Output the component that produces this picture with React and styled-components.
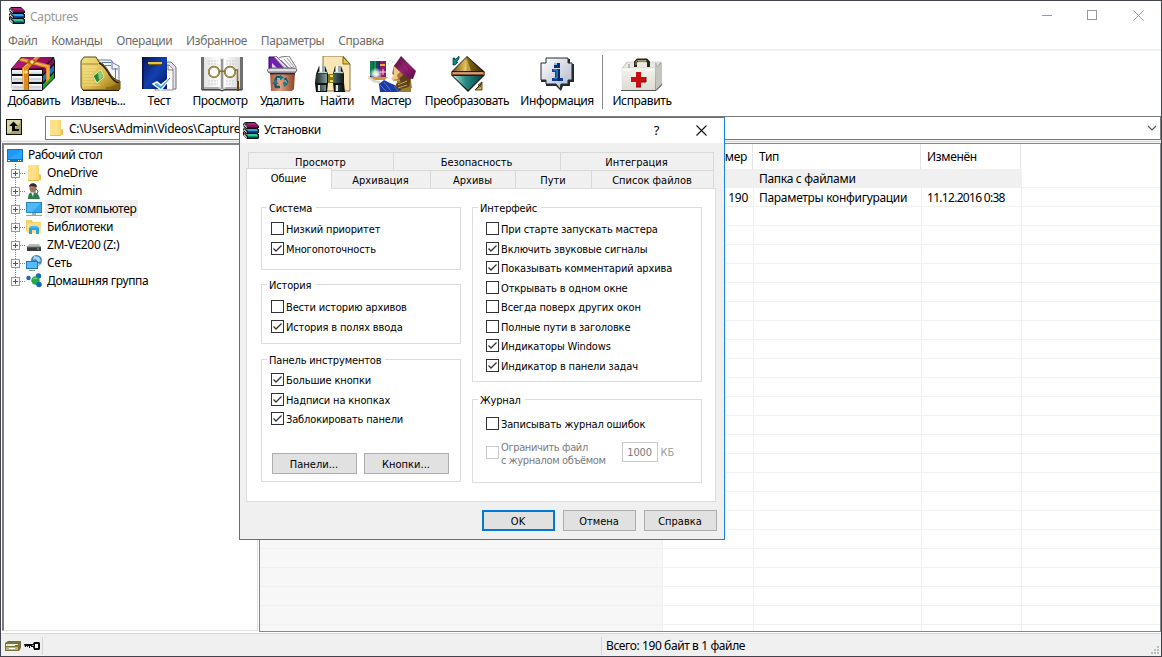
import React from 'react';
import styled, { createGlobalStyle, css } from 'styled-components';

const Global = createGlobalStyle`
  * { box-sizing: border-box; }
  body { margin: 0; background: #fff; overflow: hidden; }
`;

const Window = styled.div`
  position: relative;
  display: flex;
  flex-direction: column;
  width: 1162px;
  height: 657px;
  border: 1px solid #43434d;
  background: #fff;
  color: #000;
  font: 12px/16px 'Noto Sans', 'Open Sans', sans-serif;
  letter-spacing: -0.33px;
  white-space: nowrap;
`;

/* ---------- title bar and menu ---------- */

const TitleBar = styled.header`
  display: flex;
  align-items: center;
  height: 29px;
  padding: 0 17px 0 8px;
  color: #999;
`;
const Title = styled.span`
  margin-left: 4px;
  flex: 1;
  padding-top: ${(p) => (p.$drop ? 2 : 0)}px;
  padding-bottom: ${(p) => (p.$drop ? 0 : 1)}px;
`;
const Caption = styled.div`
  display: flex;
  gap: 34px;
`;
const MenuBar = styled.nav`
  display: flex;
  gap: 13.8px;
  height: 21px;
  padding: 3px 7px 0;
  border-bottom: 2px solid #f0f0f0;
  color: #6d6d6d;
  letter-spacing: -0.4px;
`;

/* ---------- toolbar ---------- */

const Toolbar = styled.div`
  display: flex;
  height: 65px;
  padding-left: 1px;
`;
const ToolButton = styled.div`
  display: flex;
  flex-direction: column;
  align-items: center;
  width: ${(p) => p.$w}px;
  padding-top: 5px;
  letter-spacing: -0.38px;
  svg { margin-left: ${(p) => p.$shift || 0}px; }
  span { margin-top: 1px; }
`;
const ToolDivider = styled.div`
  width: 1px;
  height: 54px;
  margin: 4px 3px 0 2px;
  background: #8c8c8c;
`;

/* ---------- address row ---------- */

const AddressRow = styled.div`
  display: flex;
  align-items: center;
  height: 24px;
  padding-left: 5px;
`;
const UpButton = styled.div`
  width: 16px;
  height: 16px;
  margin: 0 23px 2px 0;
  svg { display: block; }
`;
const PathBox = styled.div`
  display: flex;
  flex: 1;
  align-items: center;
  height: 24px;
  padding: 0 3px 0 2px;
  border: 1px solid #7a7a7a;
  letter-spacing: -0.3px;
  span { flex: 1; margin-left: 5px; padding-top: 1px; }
`;
const Rule = styled.div`
  height: 3px;
  border-top: 1px solid #f0f0f0;
  background: linear-gradient(#dcdcdc 1px, #f4f4f4 1px);
`;

/* ---------- panes ---------- */

const Panes = styled.div`
  display: flex;
  height: 489px;
`;
const Tree = styled.div`
  width: 256px;
  height: 488px;
  margin-left: 1px;
  padding-top: 1px;
  border-style: solid;
  border-width: 2px 1px 1px 2px;
  border-color: #84848a #e3e3e3 #e3e3e3 #7d7b80;
`;
const TreeRow = styled.div`
  display: flex;
  align-items: center;
  height: 18px;
  padding-left: ${(p) => (p.$root ? 3 : 6)}px;
  svg { flex: none; }
`;
const TreeLabel = styled.span`
  height: 18px;
  margin-left: 3px;
  padding: 0 2px;
  line-height: 18px;
  background: ${(p) => (p.$selected ? '#f0f0f0' : 'transparent')};
`;
const Expander = styled.div`
  display: flex;
  flex: none;
  width: 16px;
  height: 18px;
`;

const List = styled.div`
  flex: 1;
  height: 489px;
  margin-left: 1px;
  border: 1px solid #828790;
  overflow: hidden;
`;
const columns = '403px 91px 168px 100px 1fr';
const Header = styled.div`
  display: grid;
  grid-template-columns: ${columns};
  height: 25px;
`;
const HeadCell = styled.div`
  height: 25px;
  padding: 5px 5px 0 6px;
  text-align: ${(p) => (p.$right ? 'right' : 'left')};
  border-right: 1px solid ${(p) => (p.$last ? 'transparent' : '#e5e5e5')};
  margin: 0 1px 0 -1px;
`;
const ListRow = styled.div`
  display: grid;
  grid-template-columns: ${columns};
  height: 19px;
`;
const Cell = styled.div`
  padding: 2px 5px 0;
  line-height: 16px;
  text-align: ${(p) => (p.$right ? 'right' : 'left')};
  border-bottom: 1px solid #f0f0f0;
  border-right: 1px solid ${(p) => (p.$last ? 'transparent' : '#f0f0f0')};
  background: ${(p) => (p.$selected ? '#f0f0f0' : p.$sorted ? '#f7f7f7' : '#fff')};
  letter-spacing: ${(p) => (p.$tight ? '-0.7px' : '-0.3px')};
`;

/* ---------- status bar ---------- */

const StatusBar = styled.footer`
  display: flex;
  height: 23px;
  margin-top: 1px;
  padding: 3px 1px 0 4px;
  border-top: 1px solid #d9d9d9;
  background: #f0f0f0;
  letter-spacing: -0.4px;
`;
const StatusIcons = styled.div`
  display: flex;
  gap: 3px;
  width: 38px;
  height: 18px;
  align-items: center;
  border-right: 1px solid #d4d4d4;
`;
const StatusText = styled.div`
  display: flex;
  flex: 1;
  justify-content: space-between;
  height: 18px;
  margin-left: 558px;
  padding-left: 4px;
  border-left: 1px solid #d4d4d4;
  line-height: 18px;
  svg { align-self: flex-end; }
`;

/* ---------- dialog ---------- */

const Dialog = styled.section`
  position: absolute;
  left: 238px;
  top: 116px;
  display: flex;
  flex-direction: column;
  width: 486px;
  height: 423px;
  border: 1px solid #1883d7;
  background: #f0f0f0;
  font: 11px/14px 'DejaVu Sans Condensed', 'DejaVu Sans', sans-serif;
  letter-spacing: -0.15px;
`;
const DialogTitle = styled.header`
  display: flex;
  align-items: center;
  height: 25px;
  padding: 0 17px 0 3px;
  background: #fff;
  font: 12px/16px 'Noto Sans', sans-serif;
  letter-spacing: -0.33px;
`;
const HelpMark = styled.span`
  margin: 0 37px 1px 0;
  font-size: 13px;
`;
const TabArea = styled.div`
  display: flex;
  flex-direction: column;
  margin: 9px 8px 0 6px;
`;
const TabRow = styled.div`
  display: flex;
  height: 18px;
  margin-left: ${(p) => (p.$front ? 0 : 2)}px;
  margin-right: 2px;
`;
const Tab = styled.div`
  width: ${(p) => p.$w}px;
  height: 18px;
  padding: 3px 1px 0 0;
  text-align: center;
  letter-spacing: 0;
  border: 1px solid #d9d9d9;
  border-width: 1px 1px 0 ${(p) => (p.$first ? 1 : 0)}px;
  ${(p) =>
    p.$active &&
    css`
      z-index: 1;
      height: 21px;
      margin-top: -2px;
      background: #fff;
    `}
`;
const Sheet = styled.div`
  display: flex;
  gap: 11px;
  height: 314px;
  padding: 18px 13px 0 14px;
  border: 1px solid #dcdcdc;
  background: #fff;
`;
const Column = styled.div`
  width: ${(p) => p.$w}px;
`;
const Group = styled.div`
  height: ${(p) => p.$h}px;
  margin-bottom: ${(p) => p.$after || 0}px;
  padding: 0 5px 0 ${(p) => p.$inset}px;
  border: 1px solid #dcdcdc;
`;
const Legend = styled.div`
  width: max-content;
  height: 14px;
  margin: -7px 0 ${(p) => p.$lead || 7}px ${(p) => -p.$back}px;
  padding: 0 4px 0 2px;
  background: #fff;
  line-height: 16px;
`;
const CheckRow = styled.div`
  display: flex;
  align-items: flex-start;
  height: 19.5px;
  color: ${(p) => (p.$off ? '#7c7c7c' : '#000')};
  span { margin: 1px 0 0 2px; }
`;
const Box = styled.div`
  flex: none;
  width: 13px;
  height: 13px;
  border: 1px solid ${(p) => (p.$off ? '#ccc' : '#333')};
  background: #fff;
  svg { display: block; }
`;
const LimitRow = styled(CheckRow)`
  height: 28px;
  margin-top: 3.5px;
  line-height: 13px;
  letter-spacing: -0.38px;
  ${Box} { margin-top: 6px; }
`;
const SizeInput = styled.div`
  width: 36px;
  height: 20px;
  margin: 2px 3px 0 16px;
  border: 1px solid #ccc;
  line-height: 19px;
  text-align: center;
  letter-spacing: -0.2px;
`;
const Unit = styled.div`
  padding-top: 6px;
  color: #a0a0a0;
  letter-spacing: 0;
`;
const ButtonRow = styled.div`
  display: flex;
  gap: ${(p) => p.$gap}px;
  margin: ${(p) => p.$m};
`;
const Button = styled.div`
  width: ${(p) => p.$w}px;
  height: 21px;
  padding-right: 1px;
  border: ${(p) => (p.$primary ? '2px solid #0078d7' : '1px solid #adadad')};
  background: #e1e1e1;
  line-height: ${(p) => (p.$primary ? 19 : 21)}px;
  text-align: center;
  letter-spacing: 0;
`;

/* ---------- icons ---------- */

const Books = () => (
  <svg width="17" height="17" viewBox="0 0 17 17">
    <path d="M0 2l2-2h10l4 4v2h-1v1h1v4h-1v1h1v4l-1 1H4l-4-4v-3l1-1-1-1V7l1-1z" fill="#151515" />
    <path d="M2 1h10l2 2H5z" fill="#b01b7c" />
    <path d="M5 3h10v2H5z" fill="#86105a" />
    <path d="M1 2l3 3v1L1 3.500zM1 7l3 3v1L1 8.500zM1 12l3 3v1l-3-2.500z" fill="#fff" />
    <path d="M3 7h11l1 2H5z" fill="#3a9fe4" />
    <path d="M5 9h10v1.500H5z" fill="#164aa8" />
    <path d="M3 12h11l1 2H5z" fill="#38c7a0" />
    <path d="M5 14h10v1.500H5z" fill="#0c8a69" />
    <path d="M1 5.500l3 2.500M1 10.500l3 2.500M2 1.500l3 3" stroke="#ddd" strokeDasharray="1 1" />
    <path d="M4 6.500h11M4 11.500h11" stroke="#111" />
  </svg>
);

const AddIcon = () => (
  <svg width="44" height="36" viewBox="0 0 44 36">
    <defs>
      <linearGradient id="mag" x1="0" y1="0" x2="1" y2="0">
        <stop offset="0" stopColor="#b8187e" /><stop offset="1" stopColor="#8c0c5a" />
      </linearGradient>
      <linearGradient id="page" x1="0" y1="0" x2="0" y2="1">
        <stop offset="0" stopColor="#fff" /><stop offset="1" stopColor="#d3d3dc" />
      </linearGradient>
    </defs>
    <path d="M0 13L10 1h33l1 4v17L31 35H1z" fill="#0a1014" />
    <path d="M1 28h30v6H1z" fill="url(#page)" />
    <path d="M32 28l11-11v5L32 33z" fill="#17a02c" />
    <path d="M1 20h30v6H1z" fill="url(#page)" />
    <path d="M32 20L43 9v6L32 26z" fill="#1670c8" />
    <path d="M1 14h30v4H1z" fill="url(#page)" />
    <path d="M32 13L43 2v5L32 18z" fill="#8c0c5a" />
    <path d="M0 13L11 1h31L31 13z" fill="url(#mag)" />
    <path d="M0 12.500h31" stroke="#5e0638" />
    <path d="M2 31h28M2 23h28" stroke="#b9b9c4" />
    <path d="M11 12L24 1h5L18 12v22h-6z" fill="#dd8d20" />
    <path d="M12.500 12v22M13 11L25 1.500" stroke="#ffc758" fill="none" />
    <path d="M17.500 13v21" stroke="#9c540a" />
    <path d="M8 3l4-1 27 7v14l-4 4V12L9 5z" fill="#dd8d20" />
    <path d="M10 3.500l27 7v13" fill="none" stroke="#ffc861" />
    <path d="M17 4l6-1 3 3-5 3-5-2z" fill="#b45f0d" />
    <circle cx="21" cy="6" r="1.800" fill="#ffeaa0" />
    <circle cx="15" cy="16" r="1.800" fill="#ffe28a" />
  </svg>
);

const ExtractIcon = () => (
  <svg width="41" height="36" viewBox="0 0 41 36">
    <defs>
      <linearGradient id="gold" x1="0" y1="0" x2="1" y2="1">
        <stop offset="0" stopColor="#f3e187" /><stop offset=".55" stopColor="#dfbc4c" /><stop offset="1" stopColor="#8c660c" />
      </linearGradient>
    </defs>
    <path d="M18 4h13l2 3 6 3v19H18z" fill="#f5f6fb" stroke="#76809a" />
    <path d="M22 6.500h9M25 9.500h6M32 5v8h6M35.500 12v15" stroke="#5d77b8" fill="none" />
    <path d="M1 5l3-4h12l3 5c4 1 7 5 10 10s6 8 11 9v8l-2 1H3l-2-3z" fill="url(#gold)" stroke="#58480e" />
    <path d="M2 8h16" fill="none" stroke="#a88b2c" />
    <path d="M19 7c5 2 7 6 10 11s6 8 10 9" fill="none" stroke="#2e2405" strokeWidth="1.500" />
    <path d="M26 31c5 0 9-2 13-4v6H26z" fill="#7c560a" opacity=".6" />
    <path d="M3 11h14M3 14h13M3 17h10M3 20h9M3 23h10M3 26h13M3 29h17" stroke="#f9f1b6" opacity=".6" />
    <path d="M13 20l8-6 3 7-7 6z" fill="#2f8442" stroke="#e4f3b3" />
    <path d="M18 17l3-2 2 6-4 3z" fill="#8fd070" />
    <path d="M3 34.500h36" stroke="#2e2405" />
  </svg>
);

const TestIcon = () => (
  <svg width="36" height="36" viewBox="0 0 36 36">
    <defs>
      <linearGradient id="navy" x1="0" y1="0" x2="1" y2="1">
        <stop offset="0" stopColor="#081556" /><stop offset=".5" stopColor="#1240b0" /><stop offset="1" stopColor="#04186a" />
      </linearGradient>
    </defs>
    <path d="M22 6h7l5 5v22H20z" fill="#e4e4e8" stroke="#777" />
    <path d="M20 9h7l4 4v21H13z" fill="#fff" stroke="#888" />
    <path d="M26 9v5h5" fill="none" stroke="#777" />
    <path d="M1 1h24v32H1z" fill="url(#navy)" />
    <path d="M0 1h1.500v32H0z" fill="#040e48" />
    <path d="M6 7h14" stroke="#e2c247" strokeWidth="2" />
    <path d="M7 8.500h12" stroke="#7b5d08" />
    <path d="M11 28l4-2 4 3 11-9-11 14z" fill="#59bdf2" stroke="#f5fbff" strokeWidth="1.500" />
    <path d="M13 28l6 4 9-10" fill="none" stroke="#2389dc" />
  </svg>
);

const ViewIcon = () => (
  <svg width="42" height="36" viewBox="0 0 42 36">
    <defs>
      <linearGradient id="leaf" x1="0" y1="0" x2="1" y2="0">
        <stop offset="0" stopColor="#e4e4e4" /><stop offset=".44" stopColor="#fff" /><stop offset=".5" stopColor="#a5a5a5" /><stop offset=".57" stopColor="#fff" /><stop offset="1" stopColor="#d8d8d8" />
      </linearGradient>
    </defs>
    <path d="M0 1h3v29h36V1h3v33H23l-2 1-2-1H0z" fill="#6e6e6e" />
    <path d="M3 1h14l4 2 4-2h14v30H25l-4 2-4-2H3z" fill="url(#leaf)" />
    <path d="M3 32h15l3 2 3-2h15" fill="none" stroke="#eee" />
    <path d="M1 34h18l2 1 2-1h18" fill="none" stroke="#222" />
    <path d="M21 3v29" stroke="#777" />
    <path d="M7 5h10M7 8h10M7 25h10M7 28h10M25 5h10M25 8h10M25 25h9M25 28h9" stroke="#ccc" strokeDasharray="2 1" />
    <circle cx="13" cy="16" r="5.300" fill="#fafafa" stroke="#5b4e1c" strokeWidth="1.700" />
    <circle cx="29" cy="16" r="5.300" fill="#fafafa" stroke="#5b4e1c" strokeWidth="1.700" />
    <circle cx="13" cy="16" r="5.300" fill="none" stroke="#dbc56c" strokeWidth=".7" />
    <circle cx="29" cy="16" r="5.300" fill="none" stroke="#dbc56c" strokeWidth=".7" />
    <path d="M18 16q3-2 6 0M34 14h2.500v12" fill="none" stroke="#8b6d16" strokeWidth="1.500" />
    <path d="M36 25h2v10h-2z" fill="#5c4308" />
  </svg>
);

const DeleteIcon = () => (
  <svg width="31" height="36" viewBox="0 0 31 36">
    <defs>
      <linearGradient id="bin" x1="0" y1="0" x2="1" y2="0">
        <stop offset="0" stopColor="#a85a40" /><stop offset=".4" stopColor="#e2a183" /><stop offset="1" stopColor="#8c4027" />
      </linearGradient>
    </defs>
    <path d="M10 3l4-2 8-1 7 11v4H7z" fill="#f6f6f9" stroke="#777" />
    <path d="M14 4l8 8M17 3l8 9M20 2l7 9" stroke="#999" />
    <path d="M2 1h5l11 12H2z" fill="#6e1fb0" stroke="#31075c" />
    <path d="M7 1l11 12h4L9 0z" fill="#ead7f7" stroke="#7a6a88" />
    <path d="M5 7l5 5H5z" fill="#e4cdf6" />
    <path d="M0 14l4-2h23l3 2-2 3H2z" fill="#a9a9b0" stroke="#66666c" />
    <path d="M1 14h28" stroke="#f1f1f5" strokeWidth="1.500" />
    <path d="M3 17h25l-1 16-2 2H4z" fill="url(#bin)" />
    <path d="M3 17h25v1.500H3z" fill="#4f2114" />
    <g fill="none" stroke="#125a62" strokeWidth="2.500">
      <path d="M8 25l2-4h4M18 22l2 4-2 3M13 31H9l-1-3" />
    </g>
    <path d="M13 18.500l4 3-4 3zM22 26l-5 5-1-5zM4.500 28l4-4 3 4z" fill="#1c7680" />
    <path d="M10 22.500h3M18.500 24l1 3" stroke="#79cbd0" />
  </svg>
);

const FindIcon = () => (
  <svg width="37" height="36" viewBox="0 0 37 36">
    <defs>
      <linearGradient id="tube" x1="0" y1="0" x2="1" y2="0">
        <stop offset="0" stopColor="#1e2a2a" /><stop offset=".4" stopColor="#84a2a1" /><stop offset=".7" stopColor="#3d5858" /><stop offset="1" stopColor="#0b1313" />
      </linearGradient>
    </defs>
    <path d="M8 0h20l7 8v27H8z" fill="#f8e7b4" stroke="#8a7740" />
    <path d="M28 1v7h7z" fill="#e5c63e" stroke="#7a6617" />
    <path d="M13 18h7v9h-7z" fill="#8c751c" />
    <path d="M15 19h4v2h-4zM15 24h4v2h-4z" fill="#efdf45" />
    <path d="M4 10h6l3 8v9l-1 9H1L0 27l1-9z" fill="#111" />
    <path d="M20 10h6l3 8v9l1 9H19l-1-9v-9z" fill="#111" />
    <path d="M4 10h6v6H4zM20 10h6v6h-6z" fill="#9ba9a9" />
    <path d="M5 10h2v6H5zM21 10h2v6h-2z" fill="#fff" />
    <path d="M1 18h11v9H1zM18 18h11v9H18z" fill="url(#tube)" />
    <path d="M2 29h9v6H2zM20 29h8v6h-8z" fill="url(#tube)" />
    <path d="M3 29h2v6H3zM21 29h2v6h-2z" fill="#dce6e6" />
    <path d="M3 16.500h9M19 16.500h9" stroke="#c4cfcf" strokeWidth="1.500" />
  </svg>
);

const WizardIcon = () => (
  <svg width="48" height="36" viewBox="0 0 48 36">
    <defs>
      <linearGradient id="hat" x1="0" y1="0" x2="1" y2="1">
        <stop offset="0" stopColor="#50113e" /><stop offset=".5" stopColor="#9a2174" /><stop offset="1" stopColor="#50103d" />
      </linearGradient>
      <radialGradient id="glow">
        <stop offset="0" stopColor="#fff" /><stop offset=".4" stopColor="#fff" stopOpacity=".8" /><stop offset="1" stopColor="#fff" stopOpacity="0" />
      </radialGradient>
    </defs>
    <path d="M2 5h16v17H2z" fill="#2a0d2c" />
    <path d="M2 5h3v15H2z" fill="#0e7b51" /><path d="M5.500 5h3v15h-3z" fill="#15935f" />
    <path d="M9 5h2v15H9z" fill="#20348c" /><path d="M11.500 5H18v16h-6.500z" fill="#911964" />
    <path d="M12 8h5v2h-5z" fill="#e9b130" />
    <path d="M15 13v6M12 16h6" stroke="#f2dfe9" />
    <circle cx="8" cy="18" r="6.500" fill="url(#glow)" />
    <path d="M0 21h20l-3 3H4z" fill="#c99b43" />
    <path d="M0 21l6 4 7 2" fill="none" stroke="#ddd5d0" strokeWidth="2.500" />
    <path d="M11 28l5-4 6 3 9 4 12-1v6H12z" fill="#1c3aa0" />
    <path d="M12 29l6 6M16 26l7 9M26 30l4 5" stroke="#4a77dd" />
    <path d="M26 9l5-2 11 11 2 14-7 3-9-4 1-6-5-1 2-5-2-1z" fill="#a97731" />
    <path d="M26 10l6 6-3 3 1 4-6 1-1-2 3-3z" fill="#f4c88c" />
    <path d="M31 23l4-4v-6l8 8-2 11-12 1-1-5 5-2z" fill="#5c401a" />
    <path d="M25 25l7-1M30 29l9-4M30 32l9-3" stroke="#c6a760" />
    <path d="M43 30v6H29l8-4z" fill="#9a7c33" />
    <path d="M33 0l15 15-3 8-6-1-13-12z" fill="url(#hat)" />
    <path d="M30 5l12 17M33 2l13 17" stroke="#6c1852" strokeWidth=".8" />
    <path d="M10 2v1M17 1v1M22 4v1M24 6h1M20 8h1" stroke="#b8b8c4" />
  </svg>
);

const ConvertIcon = () => (
  <svg width="34" height="36" viewBox="0 0 34 36">
    <defs>
      <linearGradient id="brass" x1="0" y1="0" x2="1" y2="0">
        <stop offset="0" stopColor="#7a5a10" /><stop offset=".42" stopColor="#e0bc58" /><stop offset=".5" stopColor="#8d6811" /><stop offset="1" stopColor="#3f2c03" />
      </linearGradient>
      <linearGradient id="teal" x1="0" y1="0" x2="1" y2="0">
        <stop offset="0" stopColor="#b9e3d9" /><stop offset=".4" stopColor="#2b8e87" /><stop offset="1" stopColor="#06403f" />
      </linearGradient>
    </defs>
    <path d="M16 0l18 16v3L17 36 0 19v-3z" fill="#1b1b16" />
    <path d="M16 1l15 14H2z" fill="url(#brass)" />
    <path d="M16 3l4 12h-8z" fill="#f1d98a" opacity=".5" />
    <path d="M2 20h30L17 34z" fill="url(#teal)" />
    <path d="M0 17.500h34" stroke="#a8643f" strokeWidth="2.500" />
    <path d="M2 17h30" stroke="#ffd4a2" />
    <path d="M2 9V2h2v2l4-4v3L5 6h2l-3 3z" fill="#0a8a86" stroke="#033" strokeWidth=".7" />
    <path d="M31 26v8h-7l2-2 4-2-3-1z" fill="#d2ae49" stroke="#3a2700" strokeWidth=".8" />
    <path d="M25 33l6-6" stroke="#3a2700" />
  </svg>
);

const InfoIcon = () => (
  <svg width="35" height="36" viewBox="0 0 35 36">
    <defs>
      <linearGradient id="bubble" x1="0" y1="0" x2="1" y2="1">
        <stop offset="0" stopColor="#fff" /><stop offset="1" stopColor="#aeb4c4" />
      </linearGradient>
    </defs>
    <path d="M7 3h23v5h4v18h-4v4h-7l-2 5-5-5H6v-4H1V8h6z" fill="#222a36" />
    <path d="M6 2h22v5h4v17h-4v4h-7l-1 5-4-5H6v-4H1V7h5z" fill="url(#bubble)" stroke="#222a36" />
    <rect x="14" y="7" width="6" height="5" fill="#082f78" />
    <rect x="14" y="7" width="3" height="2" fill="#77c5f0" />
    <path d="M12 13h8v9h3v3H12v-3h3v-6h-3z" fill="#0b3f95" />
    <path d="M13 14h4v8h-3" fill="none" stroke="#41a3e3" />
    <path d="M19 14v11" stroke="#05142f" />
  </svg>
);

const RepairIcon = () => (
  <svg width="42" height="36" viewBox="0 0 42 36">
    <defs>
      <linearGradient id="kit" x1="0" y1="0" x2="0" y2="1">
        <stop offset="0" stopColor="#f3f3ee" /><stop offset="1" stopColor="#dcdcd4" />
      </linearGradient>
    </defs>
    <path d="M1 12l5-6h34l1 2v21l-6 6z" fill="#9a9a96" />
    <path d="M1 12l6-6h33l-6 6z" fill="#eaeae6" stroke="#c3c3bd" strokeWidth=".6" />
    <path d="M8 8v4M35 7v4" stroke="#888" />
    <path d="M34 12l7-5v20l-6 7z" fill="#c5c5bf" />
    <path d="M0 12h34v22H1z" fill="url(#kit)" />
    <path d="M0 34.500h35l6-6" fill="none" stroke="#55554f" />
    <path d="M14.500 11V6l2-2h9l2 2v5" fill="none" stroke="#28261c" strokeWidth="3" />
    <path d="M15 9V5.500l1.500-1h9" fill="none" stroke="#a79a69" />
    <path d="M15 16h5v5h5v5h-5v5h-5v-5h-5v-5h5z" fill="#c80e0e" />
    <path d="M15 31h5M20 26h5v-5" fill="none" stroke="#7a0505" />
    <path d="M2 14h8M25 14h7" stroke="#fff" />
  </svg>
);

const FolderIcon = () => (
  <svg width="16" height="18" viewBox="0 0 16 18">
    <path d="M2 1h11v9l2 1v5H2z" fill="#fbd873" />
    <path d="M2 1h8v16H2z" fill="#fde08a" />
    <path d="M13 10l2 1v5h-2z" fill="#eec04f" />
    <path d="M2 16.500h11" stroke="#e9bd51" />
  </svg>
);

const DesktopIcon = () => (
  <svg width="16" height="13" viewBox="0 0 16 13">
    <path d="M0 0h16v13H0z" fill="#0b76c4" />
    <path d="M1 1h14v9H1z" fill="#1e98f2" />
    <path d="M1 10h14L15 1z" fill="#2aa5fb" />
    <path d="M1 11.500h2M11 11.500h1M13 11.500h1" stroke="#fff" />
  </svg>
);

const UserIcon = () => (
  <svg width="16" height="16" viewBox="0 0 16 16">
    <path d="M2 16c0-4 1-7 5-7s6 3 7 7z" fill="#2d7d51" />
    <path d="M5 9l2 5 1-5z" fill="#eee" />
    <ellipse cx="7" cy="5" rx="3.500" ry="4.500" fill="#a1745f" />
    <path d="M3 4c0-5 8-5 8 0-3 0-5-2-8 0z" fill="#2e2b2b" />
    <path d="M10 6l2 2-1 3" fill="none" stroke="#496b58" />
  </svg>
);

const ComputerIcon = () => (
  <svg width="16" height="16" viewBox="0 0 16 16">
    <path d="M0 1h16v11H0z" fill="#2b86c4" />
    <path d="M1 2h14v9H1z" fill="#4fb9f8" />
    <path d="M15 2v9H6z" fill="#33a5f0" />
    <path d="M6 12h4v2H6z" fill="#9cb2c0" />
    <path d="M0 14.500h16" stroke="#91a7b5" />
  </svg>
);

const LibraryIcon = () => (
  <svg width="16" height="16" viewBox="0 0 16 16">
    <path d="M0 1h6l1 2h8v9H0z" fill="#f5cf68" />
    <path d="M1 4h14v10H1z" fill="#fbdf8d" />
    <path d="M3 15V9l2-2h6l2 2v6h-3v-4H6v4z" fill="#2ba3e3" />
    <path d="M4 8h8" stroke="#65c7f5" />
  </svg>
);

const DriveIcon = () => (
  <svg width="16" height="16" viewBox="0 0 16 16">
    <path d="M3 7h10l2 3H1z" fill="#bcbcbc" />
    <path d="M1 10h14v4H1z" fill="#3b3b3b" />
    <path d="M1 10h14" stroke="#777" />
    <path d="M11 12h2" stroke="#43e06d" />
  </svg>
);

const NetworkIcon = () => (
  <svg width="16" height="16" viewBox="0 0 16 16">
    <circle cx="10.500" cy="5.500" r="5.500" fill="#3f86b8" />
    <path d="M8 1l5 1 2 4-3 1-2-3-3 1zM11 8l3 1-2 2z" fill="#a8d8ee" />
    <path d="M0 6h12v8H0z" fill="#2179b9" />
    <path d="M1 7h10v6H1z" fill="#54bdf9" />
    <path d="M3 15.500h6" stroke="#8299a8" />
  </svg>
);

const HomegroupIcon = () => (
  <svg width="16" height="16" viewBox="0 0 16 16">
    <circle cx="2.500" cy="5" r="2.200" fill="#1768bd" />
    <circle cx="12.500" cy="3" r="2.700" fill="#1768bd" />
    <circle cx="9.500" cy="7.500" r="4.200" fill="#24aa49" />
    <circle cx="13" cy="11.500" r="2.800" fill="#1565b9" />
    <path d="M7 6q2-2 4 0" stroke="#83da91" fill="none" />
  </svg>
);

const UpIcon = () => (
  <svg width="16" height="16" viewBox="0 0 16 16">
    <path d="M0 0h16v16H0z" fill="#0f0f06" />
    <path d="M1 1h14v14H1z" fill="#a9a16a" />
    <path d="M1 1h13v3L4 14H1z" fill="#d7d3a4" />
    <path d="M7.500 2.500L3 7h3v5h7v-2H9V7h3z" fill="#050505" />
  </svg>
);

const TreeLines = ({ last }) => (
  <svg width="16" height="18" viewBox="0 0 16 18">
    <path d={last ? 'M5.5 0v9' : 'M5.5 0v18'} stroke="#808080" strokeDasharray="1 1" />
    <path d="M10 9.500h6" stroke="#808080" strokeDasharray="1 1" />
    <rect x="1.500" y="5.500" width="8" height="8" fill="#f8f8f8" stroke="#9a9a9a" />
    <path d="M3 9.500h5M5.500 7v5" stroke="#3c50b0" />
  </svg>
);

const DiskIcon = () => (
  <svg width="16" height="10" viewBox="0 0 16 10">
    <path d="M0 2l3-2h13v7l-2 3H0z" fill="#77733c" />
    <path d="M1 3h12v2H1z" fill="#e4e2ba" />
    <path d="M1 6h12v3H1z" fill="#b7b47a" />
    <path d="M3 4h8M4 7.500h6" stroke="#fff" />
    <path d="M10 4.500h3" stroke="#159b98" />
  </svg>
);

const KeyIcon = () => (
  <svg width="16" height="10" viewBox="0 0 16 10">
    <path d="M0 3h9l1-2h5l1 1v6l-1 1h-5L9 6H7V5H6v2H5V5H4v1H3V5H2v1H1z" fill="#0c0c0c" />
    <path d="M11 3h3v4h-3z" fill="#f4f4f4" />
    <path d="M8 4.500h2" stroke="#b59b31" />
  </svg>
);

const Check = () => (
  <svg width="11" height="11" viewBox="0 0 11 11">
    <path d="M1.500 5.500L4 8l5.500-5.500" fill="none" stroke="#333" strokeWidth="1.300" />
  </svg>
);

/* ---------- data ---------- */

const menu = ['Файл', 'Команды', 'Операции', 'Избранное', 'Параметры', 'Справка'];
const tools = [
  ['Добавить', 64, AddIcon, -2],
  ['Извлечь...', 64, ExtractIcon, 4],
  ['Тест', 58, TestIcon, 1],
  ['Просмотр', 64, ViewIcon, 3],
  ['Удалить', 60, DeleteIcon, 1],
  ['Найти', 50, FindIcon, -8],
  ['Мастер', 58, WizardIcon, 1],
  ['Преобразовать', 94, ConvertIcon, 1],
  ['Информация', 86, InfoIcon, 0],
];
const tree = [
  ['OneDrive', FolderIcon],
  ['Admin', UserIcon],
  ['Этот компьютер', ComputerIcon],
  ['Библиотеки', LibraryIcon],
  ['ZM-VE200 (Z:)', DriveIcon],
  ['Сеть', NetworkIcon],
  ['Домашняя группа', HomegroupIcon],
];
const files = [
  { type: 'Папка с файлами', selected: true },
  { size: '190', type: 'Параметры конфигурации', date: '11.12.2016 0:38' },
  ...Array.from({ length: 23 }, () => ({})),
];

const CheckItem = ({ on, children }) => (
  <CheckRow>
    <Box>{on && <Check />}</Box>
    <span>{children}</span>
  </CheckRow>
);

const SettingsDialog = () => (
  <Dialog>
    <DialogTitle>
      <Books />
      <Title>Установки</Title>
      <HelpMark>?</HelpMark>
      <svg width="11" height="11" viewBox="0 0 11 11">
        <path d="M.5.5l10 10M10.500.5l-10 10" stroke="#111" strokeWidth="1.100" />
      </svg>
    </DialogTitle>
    <TabArea>
      <TabRow>
        <Tab $w={146} $first>Просмотр</Tab>
        <Tab $w={167}>Безопасность</Tab>
        <Tab $w={153}>Интеграция</Tab>
      </TabRow>
      <TabRow $front>
        <Tab $w={86} $first $active>Общие</Tab>
        <Tab $w={99}>Архивация</Tab>
        <Tab $w={85}>Архивы</Tab>
        <Tab $w={76}>Пути</Tab>
        <Tab $w={122}>Список файлов</Tab>
      </TabRow>
      <Sheet>
        <Column $w={200}>
          <Group $h={63} $after={14} $inset={9}>
            <Legend $back={4}>Система</Legend>
            <CheckItem>Низкий приоритет</CheckItem>
            <CheckItem on>Многопоточность</CheckItem>
          </Group>
          <Group $h={60} $after={15} $inset={9}>
            <Legend $back={4} $lead={8}>История</Legend>
            <CheckItem>Вести историю архивов</CheckItem>
            <CheckItem on>История в полях ввода</CheckItem>
          </Group>
          <Group $h={123} $inset={9}>
            <Legend $back={4} $lead={6}>Панель инструментов</Legend>
            <CheckItem on>Большие кнопки</CheckItem>
            <CheckItem on>Надписи на кнопках</CheckItem>
            <CheckItem on>Заблокировать панели</CheckItem>
            <ButtonRow $gap={7} $m="21px 0 0 1px">
              <Button $w={85}>Панели...</Button>
              <Button $w={85}>Кнопки...</Button>
            </ButtonRow>
          </Group>
        </Column>
        <Column $w={230}>
          <Group $h={175} $after={17} $inset={13}>
            <Legend $back={8}>Интерфейс</Legend>
            <CheckItem>При старте запускать мастера</CheckItem>
            <CheckItem on>Включить звуковые сигналы</CheckItem>
            <CheckItem on>Показывать комментарий архива</CheckItem>
            <CheckItem>Открывать в одном окне</CheckItem>
            <CheckItem>Всегда поверх других окон</CheckItem>
            <CheckItem>Полные пути в заголовке</CheckItem>
            <CheckItem on>Индикаторы Windows</CheckItem>
            <CheckItem on>Индикатор в панели задач</CheckItem>
          </Group>
          <Group $h={84} $inset={13}>
            <Legend $back={8} $lead={10}>Журнал</Legend>
            <CheckItem>Записывать журнал ошибок</CheckItem>
            <LimitRow $off>
              <Box $off />
              <span>Ограничить файл<br />с журналом объёмом</span>
              <SizeInput>1000</SizeInput>
              <Unit>КБ</Unit>
            </LimitRow>
          </Group>
        </Column>
      </Sheet>
    </TabArea>
    <ButtonRow $gap={8} $m="8px 0 0 242px">
      <Button $w={73} $primary>OK</Button>
      <Button $w={73}>Отмена</Button>
      <Button $w={73}>Справка</Button>
    </ButtonRow>
  </Dialog>
);

export default function App() {
  return (
    <Window>
      <Global />
      <TitleBar>
        <Books />
        <Title $drop>Captures</Title>
        <Caption>
          <svg width="11" height="11" viewBox="0 0 11 11"><path d="M0 5.500h10" stroke="#999" /></svg>
          <svg width="12" height="11" viewBox="0 0 12 11"><rect x=".5" y=".5" width="9" height="9" fill="none" stroke="#999" /></svg>
          <svg width="11" height="11" viewBox="0 0 11 11"><path d="M.5.5l10 10M10.500.5l-10 10" stroke="#999" /></svg>
        </Caption>
      </TitleBar>
      <MenuBar>{menu.map((m) => <span key={m}>{m}</span>)}</MenuBar>
      <Toolbar>
        {tools.map(([name, w, Icon, shift]) => (
          <ToolButton key={name} $w={w} $shift={shift}><Icon /><span>{name}</span></ToolButton>
        ))}
        <ToolDivider />
        <ToolButton $w={72}><RepairIcon /><span>Исправить</span></ToolButton>
      </Toolbar>
      <AddressRow>
        <UpButton><UpIcon /></UpButton>
        <PathBox>
          <FolderIcon />
          <span>C:\Users\Admin\Videos\Captures</span>
          <svg width="10" height="6" viewBox="0 0 10 6"><path d="M1 1l4 4 4-4" fill="none" stroke="#555" strokeWidth="1.200" /></svg>
        </PathBox>
      </AddressRow>
      <Rule />
      <Panes>
        <Tree>
          <TreeRow $root>
            <DesktopIcon />
            <TreeLabel>Рабочий стол</TreeLabel>
          </TreeRow>
          {tree.map(([name, Icon], i) => (
            <TreeRow key={name}>
              <Expander><TreeLines last={i === tree.length - 1} /></Expander>
              <Icon />
              <TreeLabel $selected={i === 2}>{name}</TreeLabel>
            </TreeRow>
          ))}
        </Tree>
        <List>
          <Header>
            <HeadCell>Имя</HeadCell>
            <HeadCell $right>Размер</HeadCell>
            <HeadCell>Тип</HeadCell>
            <HeadCell>Изменён</HeadCell>
            <HeadCell $last />
          </Header>
          {files.map((f, i) => (
            <ListRow key={i}>
              <Cell $sorted $selected={f.selected} />
              <Cell $right $selected={f.selected}>{f.size}</Cell>
              <Cell $selected={f.selected}>{f.type}</Cell>
              <Cell $tight $selected={f.selected}>{f.date}</Cell>
              <Cell $last />
            </ListRow>
          ))}
        </List>
      </Panes>
      <StatusBar>
        <StatusIcons><DiskIcon /><KeyIcon /></StatusIcons>
        <StatusText>
          <span>Всего: 190 байт в 1 файле</span>
          <svg width="9" height="9" viewBox="0 0 9 9"><path d="M6 0h2v2H6zM3 3h2v2H3zM6 3h2v2H6zM0 6h2v2H0zM3 6h2v2H3zM6 6h2v2H6z" fill="#bdbdbd" /></svg>
        </StatusText>
      </StatusBar>
      <SettingsDialog />
    </Window>
  );
}
